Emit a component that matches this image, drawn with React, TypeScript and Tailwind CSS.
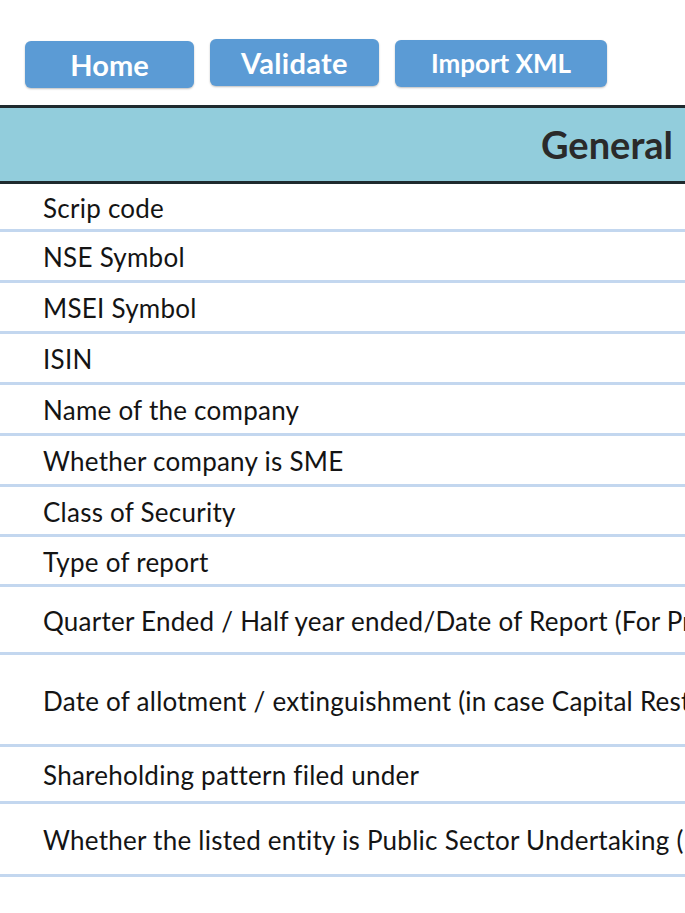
import React from 'react';

const rows: { label: string; h: string }[] = [
  { label: 'Scrip code', h: 'h-[48px]' },
  { label: 'NSE Symbol', h: 'h-[51px]' },
  { label: 'MSEI Symbol', h: 'h-[51px]' },
  { label: 'ISIN', h: 'h-[51px]' },
  { label: 'Name of the company', h: 'h-[51px]' },
  { label: 'Whether company is SME', h: 'h-[51px]' },
  { label: 'Class of Security', h: 'h-[50px]' },
  { label: 'Type of report', h: 'h-[50px]' },
  { label: 'Quarter Ended / Half year ended/Date of Report (For Prelisting / Allotment)', h: 'h-[68px]' },
  { label: 'Date of allotment / extinguishment (in case Capital Restructuring selected) / Listing Date', h: 'h-[92px]' },
  { label: 'Shareholding pattern filed under', h: 'h-[57px]' },
  { label: 'Whether the listed entity is Public Sector Undertaking (PSU)?', h: 'h-[73px]' },
];

function ActionButton({ label, className }: { label: string; className: string }) {
  return (
    <button
      className={`flex items-center justify-center rounded-[6px] bg-[#5B9BD5] font-bold text-white shadow-[0_1px_2px_rgba(0,0,0,0.25)] ${className}`}
    >
      {label}
    </button>
  );
}

export default function App() {
  return (
    <div className="min-h-[913px] w-full overflow-hidden bg-white font-['Lato','Liberation_Sans',sans-serif] text-[#141414]">
      {/* Toolbar */}
      <div className="flex items-start gap-4 pl-[25px] pt-[40px]">
        <ActionButton label="Home" className="mt-[1px] h-[47px] w-[169px] text-[29px]" />
        <ActionButton label="Validate" className="mt-[-1px] h-[47px] w-[169px] text-[29px] tracking-[0.3px]" />
        <ActionButton label="Import XML" className="h-[47px] w-[212px] text-[26px]" />
      </div>

      {/* Section header */}
      <div className="mt-[17px] h-[79px] border-y-[3px] border-[#1f2a2e] bg-[#92CDDC]">
        <div className="flex h-full items-center whitespace-nowrap pl-[541px] text-[38px] font-bold text-[#2a2a2a]">
          General
        </div>
      </div>

      {/* Rows */}
      <div>
        {rows.map((r) => (
          <div
            key={r.label}
            className={`flex items-center whitespace-nowrap border-b-[3px] border-[#C3D7EF] pl-[43px] pt-[3px] text-[26px] tracking-[0.25px] ${r.h}`}
          >
            {r.label}
          </div>
        ))}
      </div>
    </div>
  );
}
